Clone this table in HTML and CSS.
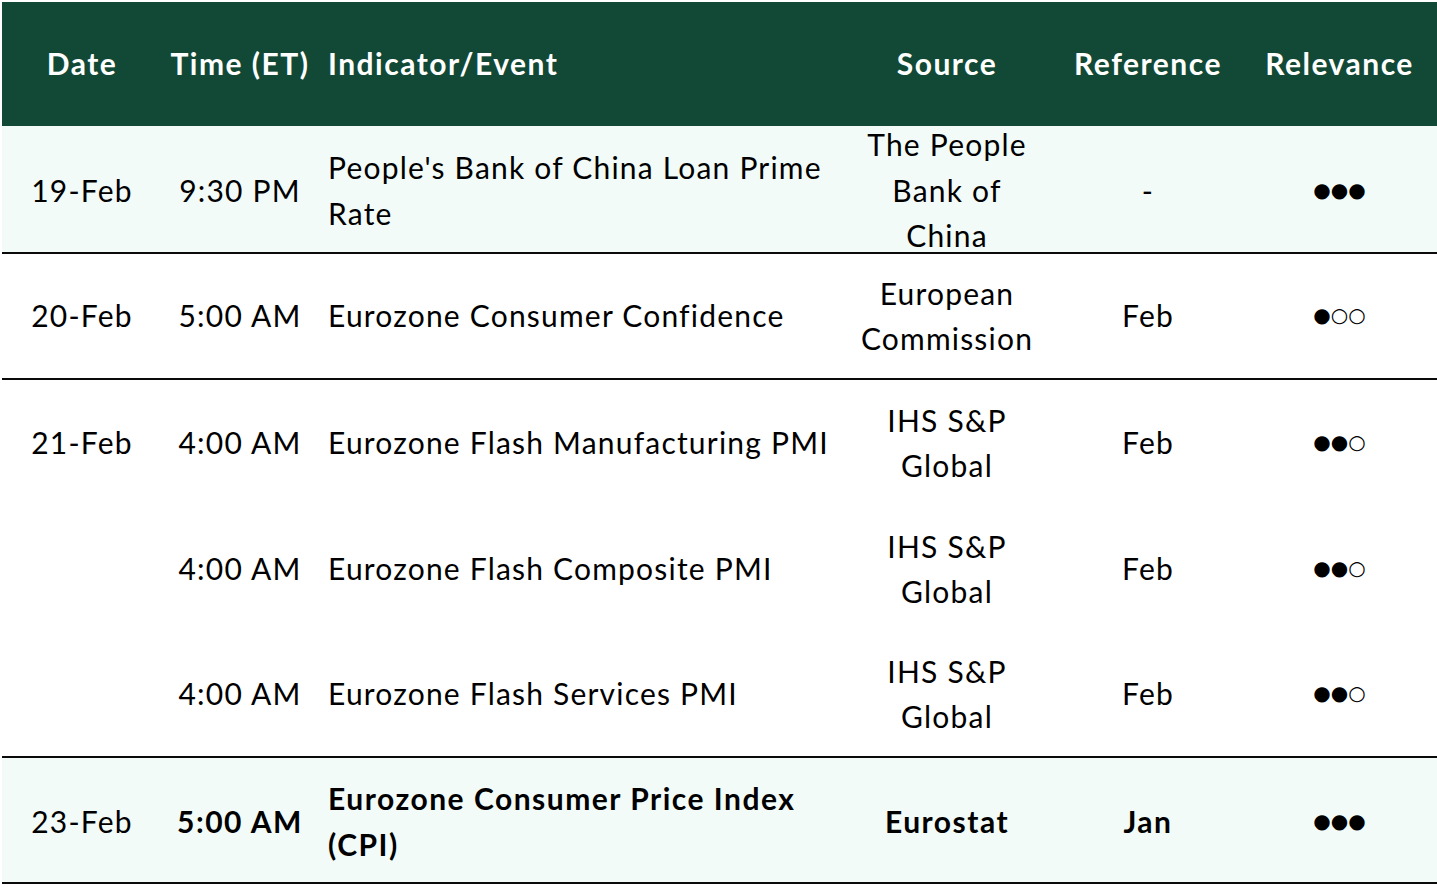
FILE: index.html
```html
<!DOCTYPE html>
<html lang="en">
<head>
<meta charset="utf-8">
<title>Economic Calendar</title>
<link rel="stylesheet" href="styles.css">
</head>
<body>
<div class="cal">
  <div class="row head">
    <div class="c date">Date</div>
    <div class="c time">Time (ET)</div>
    <div class="c event">Indicator/Event</div>
    <div class="c src">Source</div>
    <div class="c ref">Reference</div>
    <div class="c rel">Relevance</div>
  </div>
  <div class="row mint end first">
    <div class="c date">19-Feb</div>
    <div class="c time">9:30 PM</div>
    <div class="c event">People's Bank of China Loan Prime Rate</div>
    <div class="c src">The People Bank of China</div>
    <div class="c ref">-</div>
    <div class="c rel"><span class="dots">●●●</span></div>
  </div>
  <div class="row end">
    <div class="c date">20-Feb</div>
    <div class="c time">5:00 AM</div>
    <div class="c event">Eurozone Consumer Confidence</div>
    <div class="c src">European Commission</div>
    <div class="c ref">Feb</div>
    <div class="c rel"><span class="dots">●○○</span></div>
  </div>
  <div class="row">
    <div class="c date">21-Feb</div>
    <div class="c time">4:00 AM</div>
    <div class="c event">Eurozone Flash Manufacturing PMI</div>
    <div class="c src">IHS S&amp;P Global</div>
    <div class="c ref">Feb</div>
    <div class="c rel"><span class="dots">●●○</span></div>
  </div>
  <div class="row">
    <div class="c date"></div>
    <div class="c time">4:00 AM</div>
    <div class="c event">Eurozone Flash Composite PMI</div>
    <div class="c src">IHS S&amp;P Global</div>
    <div class="c ref">Feb</div>
    <div class="c rel"><span class="dots">●●○</span></div>
  </div>
  <div class="row end">
    <div class="c date"></div>
    <div class="c time">4:00 AM</div>
    <div class="c event">Eurozone Flash Services PMI</div>
    <div class="c src">IHS S&amp;P Global</div>
    <div class="c ref">Feb</div>
    <div class="c rel"><span class="dots">●●○</span></div>
  </div>
  <div class="row mint end last">
    <div class="c date">23-Feb</div>
    <div class="c time b">5:00 AM</div>
    <div class="c event b">Eurozone Consumer Price Index (CPI)</div>
    <div class="c src b">Eurostat</div>
    <div class="c ref b">Jan</div>
    <div class="c rel"><span class="dots">●●●</span></div>
  </div>
</div>
</body>
</html>
```

FILE: styles.css
```css
html, body {
  margin: 0;
  padding: 0;
  background: #ffffff;
}
body {
  font-family: Lato, "Noto Sans", sans-serif;
  color: #000;
  font-size: 30px;
  line-height: 45.5px;
  letter-spacing: 1.2px;
}
.cal {
  margin: 2px 0 0 2px;
  width: 1435px;
}
.row {
  display: grid;
  grid-template-columns: 160px 156px 530px 198px 204px 179px;
  box-sizing: border-box;
  height: 126px;
}
.row.first {
  height: 128px;
  padding-top: 3px;
}
.row.last {
  padding-top: 3px;
}
.row.end {
  border-bottom: 2px solid #0a0a0a;
}
.row.mint {
  background: #f2fbf8;
}
.head {
  background: #124936;
  color: #fff;
  font-weight: 700;
  letter-spacing: 1.5px;
  height: 124px;
}
.c {
  display: flex;
  align-items: center;
  justify-content: center;
  text-align: center;
  min-height: 0;
}
.c.event {
  justify-content: flex-start;
  text-align: left;
  padding-left: 10px;
  padding-right: 10px;
}
.c.src {
  padding: 0 8px;
}
.b {
  font-weight: 700;
  letter-spacing: 1.5px;
}
.dots {
  font-family: "DejaVu Sans", sans-serif;
  font-size: 20px;
  letter-spacing: 0;
}
```
